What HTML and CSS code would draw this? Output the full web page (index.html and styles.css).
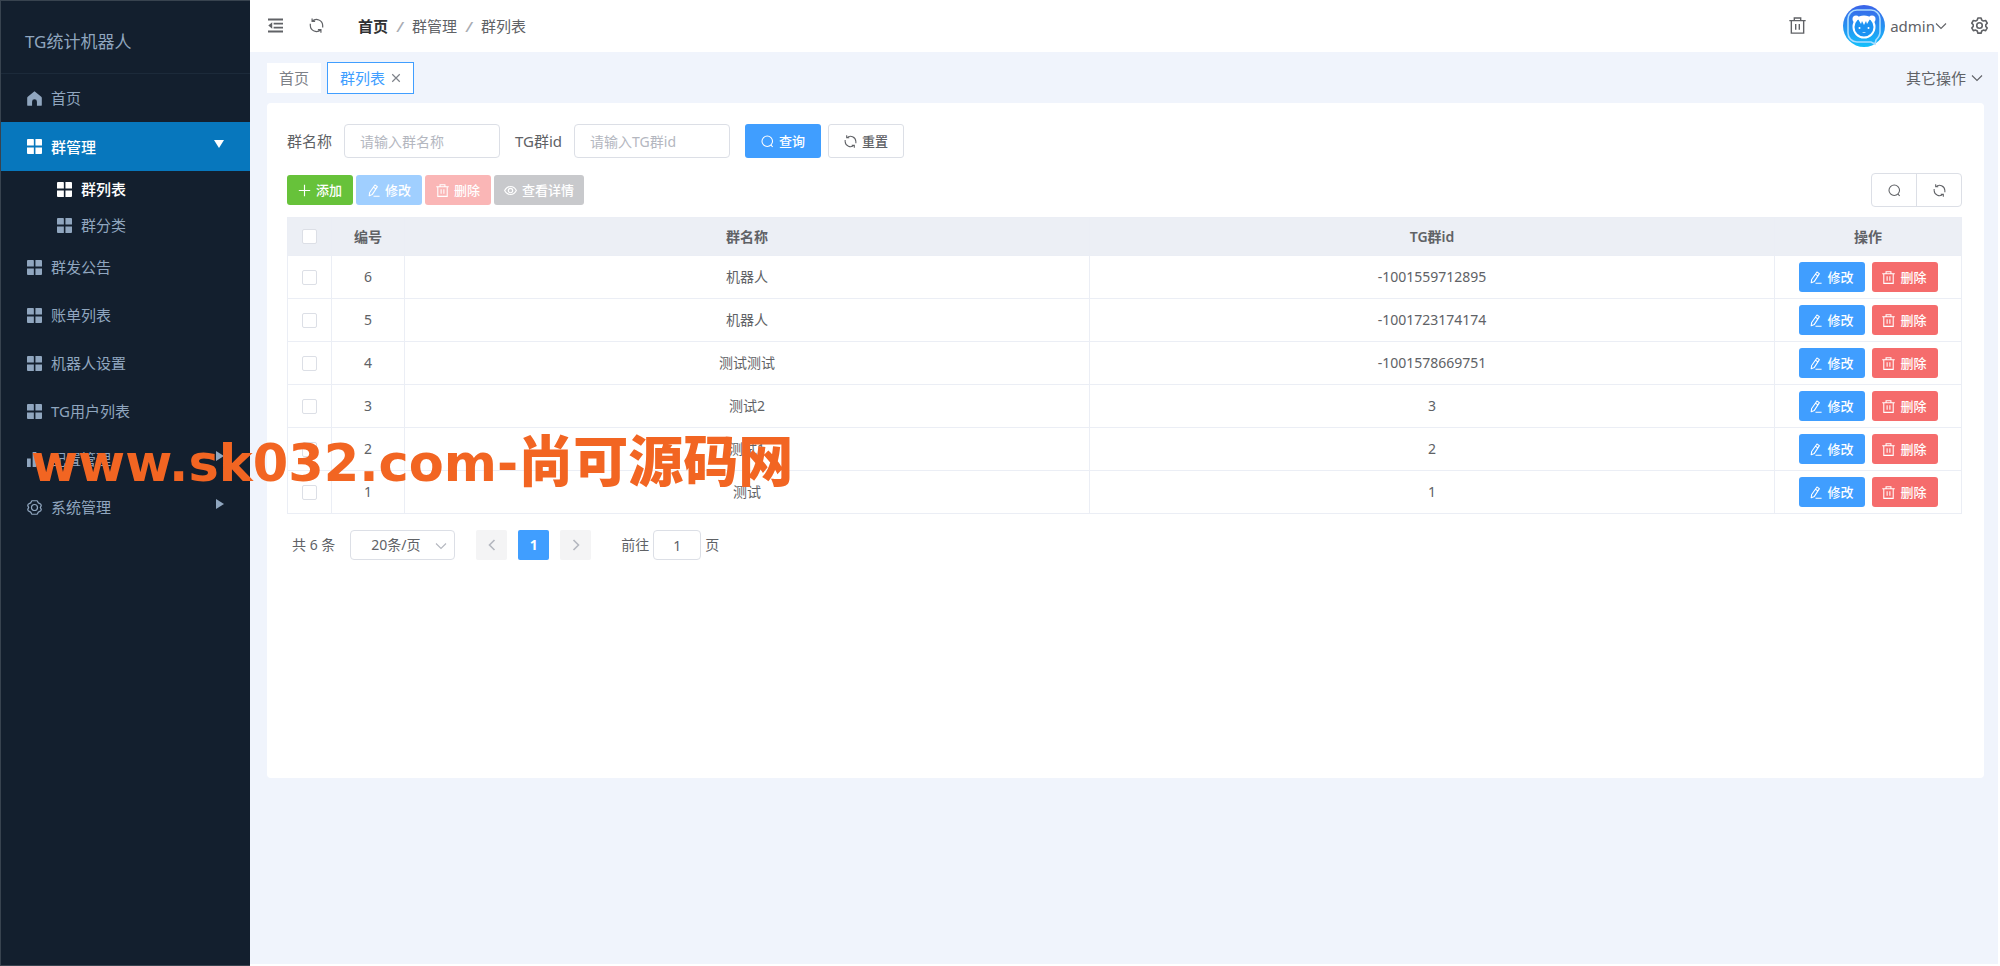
FILE: index.html
```
<!DOCTYPE html>
<html lang="zh-CN">
<head>
<meta charset="utf-8">
<title>TG统计机器人</title>
<link rel="stylesheet" href="styles.css">
</head>
<body>
<svg class="sprite" aria-hidden="true">
  <symbol id="grid" viewBox="0 0 16 16"><path fill="currentColor" d="M1 0h5.500a.8.8 0 0 1 .8.8v6.200H0V1a1 1 0 0 1 1-1zM9 0H15a1 1 0 0 1 1 1v6H9zM0 9h7.300V16H1a1 1 0 0 1-1-1zM9 9H16V15a1 1 0 0 1-1 1H9z"/></symbol>
  <symbol id="home" viewBox="0 0 16 16"><path fill="currentColor" d="M8 0.300 15.200 6.200a1.500 1.500 0 0 1 .6 1.200V14.800a1 1 0 0 1-1 1H10.600V11.500a2.600 2.600 0 0 0-5.200 0v4.300H1.200a1 1 0 0 1-1-1V7.400a1.500 1.500 0 0 1 .6-1.200z"/></symbol>
  <symbol id="bars" viewBox="0 0 16 16"><path fill="currentColor" d="M0 7h4v9H0zM6 0h4v16H6zM12 4h4v12h-4z"/></symbol>
  <symbol id="cog" viewBox="0 0 16 16"><g fill="none" stroke="currentColor" stroke-width="1.300" stroke-linejoin="round"><path d="M5.200.8h5.600l1.300 2.300 2.700 1.500.4 1.400L14.200 8l1 2-.4 1.400-2.700 1.500-1.300 2.300H5.200l-1.300-2.300-2.700-1.500L.8 10l1-2-1-2 .4-1.400 2.700-1.500z"/><circle cx="8" cy="8" r="3.200"/></g></symbol>
  <symbol id="gear" viewBox="0 0 16 16"><g fill="none" stroke="currentColor" stroke-width="1.500" stroke-linejoin="round"><path d="M6.500.9h3l.6 2 1.500.9 2.200-.5 1.500 2.500L13.900 7.300v1.500l1.400 1.500-1.500 2.500-2.200-.5-1.500.9-.6 2h-3l-.6-2-1.500-.9-2.200.5L.7 10.300 2.100 8.800V7.300L.7 5.800l1.500-2.500 2.200.5 1.500-.9z"/><circle cx="8" cy="8" r="2.600"/></g></symbol>
  <symbol id="fold" viewBox="0 0 16 16"><path fill="currentColor" d="M0 .5h16v2.200H0zM6 5h10v2H6zM6 9.200h10v2H6zM0 13.300h16v2.200H0zM4.500 4.500v7L.3 8z"/></symbol>
  <symbol id="refresh" viewBox="0 0 16 16"><path fill="none" stroke="currentColor" stroke-width="1.300" d="M3.500 3.400A6.600 6.600 0 0 1 14.600 8v2M12.500 12.600A6.600 6.600 0 0 1 1.400 8V6M3.300.4v3.100h3.200M12.700 15.600v-3.100H9.500"/></symbol>
  <symbol id="search" viewBox="0 0 16 16"><g fill="none" stroke="currentColor" stroke-width="1.300"><circle cx="7.700" cy="7.700" r="6.500"/><path d="M12.200 12.400l2.200 2.200"/></g></symbol>
  <symbol id="trash" viewBox="0 0 16 16"><path fill="none" stroke="currentColor" stroke-width="1.300" d="M.3 3.400h15.400M5 3.200V.9h6v2.300M2.200 3.600v11.600h11.600V3.600M6.300 6.500v5.500M9.700 6.500v5.500"/></symbol>
  <symbol id="edit" viewBox="0 0 16 16"><path fill="none" stroke="currentColor" stroke-width="1.300" stroke-linejoin="round" d="M9.800 1.200l3 2L6.600 12.800 2.700 14.500l.6-4.100zM8 15h7.500M8 4l3 2"/></symbol>
  <symbol id="plus" viewBox="0 0 16 16"><path stroke="currentColor" stroke-width="1.400" d="M8 1v14M1 8h14"/></symbol>
  <symbol id="eye" viewBox="0 0 16 16"><g fill="none" stroke="currentColor" stroke-width="1.400"><path d="M.8 8C4 1.500 12 1.500 15.200 8 12 14.500 4 14.500.8 8z"/><circle cx="8" cy="8" r="2.700"/></g></symbol>
  <symbol id="down" viewBox="0 0 12 12"><path fill="none" stroke="currentColor" stroke-width="1.100" d="M1 3.500l5 5 5-5"/></symbol>
  <symbol id="left" viewBox="0 0 12 12"><path fill="none" stroke="currentColor" stroke-width="1.600" d="M8.500 1l-5 5 5 5"/></symbol>
  <symbol id="right" viewBox="0 0 12 12"><path fill="none" stroke="currentColor" stroke-width="1.600" d="M3.500 1l5 5-5 5"/></symbol>
  <symbol id="close" viewBox="0 0 12 12"><path stroke="currentColor" stroke-width="1.400" d="M1.500 1.500l9 9M10.500 1.500l-9 9"/></symbol>
</svg>
<div class="app">
  <aside class="sidebar">
    <h1 class="brand">TG统计机器人</h1>
    <nav class="menu">
      <a class="item" href="#"><svg class="icon"><use href="#home"/></svg>首页</a>
      <a class="item active" href="#"><svg class="icon"><use href="#grid"/></svg>群管理<span class="caret open"></span></a>
      <a class="item sub current" href="#"><svg class="icon"><use href="#grid"/></svg>群列表</a>
      <a class="item sub" href="#"><svg class="icon"><use href="#grid"/></svg>群分类</a>
      <a class="item" href="#"><svg class="icon"><use href="#grid"/></svg>群发公告</a>
      <a class="item" href="#"><svg class="icon"><use href="#grid"/></svg>账单列表</a>
      <a class="item" href="#"><svg class="icon"><use href="#grid"/></svg>机器人设置</a>
      <a class="item" href="#"><svg class="icon"><use href="#grid"/></svg>TG用户列表</a>
      <a class="item" href="#"><svg class="icon"><use href="#bars"/></svg>配置管理<span class="caret"></span></a>
      <a class="item" href="#"><svg class="icon"><use href="#cog"/></svg>系统管理<span class="caret"></span></a>
    </nav>
  </aside>
  <div class="main">
    <header class="header">
      <button class="plain" aria-label="折叠菜单"><svg class="icon"><use href="#fold"/></svg></button>
      <button class="plain" aria-label="刷新页面"><svg class="icon"><use href="#refresh"/></svg></button>
      <nav class="crumbs"><a href="#"><b>首页</b></a><i>/</i><a href="#">群管理</a><i>/</i><a href="#">群列表</a></nav>
      <div class="tools">
        <button class="plain" aria-label="清除缓存"><svg class="icon large"><use href="#trash"/></svg></button>
        <button class="plain user">
          <svg class="avatar" viewBox="0 0 42 42">
            <defs><linearGradient id="sky" x1="0" y1="0" x2="0" y2="1"><stop offset="0" stop-color="#3b62e8"/><stop offset="1" stop-color="#12c0fb"/></linearGradient></defs>
            <circle cx="21" cy="21" r="21" fill="url(#sky)"/>
            <path d="M14 5h14c5 0 9 4 9 9v13c0 3-2 6-4 8l-1 4-4-2H14c-5 0-9-4-9-9V14c0-5 4-9 9-9z" fill="none" stroke="#a9dcff" stroke-width="1.600"/>
            <circle cx="13" cy="14" r="3.500" fill="#fff"/><circle cx="29" cy="14" r="3.500" fill="#fff"/>
            <circle cx="21" cy="22" r="10.500" fill="#1b93f3" stroke="#fff" stroke-width="2"/>
            <path d="M15 14c3-3 9-3 12 0l-3 5-1-3-2 4-2-4-1 3z" fill="#fff"/>
            <circle cx="16.500" cy="23" r="1" fill="#fff"/><circle cx="25.500" cy="23" r="1" fill="#fff"/>
            <path d="M19 27c1 1 3 1 4 0z" fill="#fff"/>
          </svg>
          <span>admin</span><svg class="chev"><use href="#down"/></svg>
        </button>
        <button class="plain" aria-label="设置"><svg class="icon large"><use href="#gear"/></svg></button>
      </div>
    </header>
    <div class="tabs">
      <a class="tab" href="#">首页</a>
      <a class="tab on" href="#">群列表<svg class="x"><use href="#close"/></svg></a>
      <button class="plain more">其它操作<svg class="chev"><use href="#down"/></svg></button>
    </div>
    <main class="card">
      <form class="search">
        <label for="name">群名称</label><input class="field" id="name" placeholder="请输入群名称">
        <label for="tgid">TG群id</label><input class="field" id="tgid" placeholder="请输入TG群id">
        <button type="button" class="btn tall blue"><svg class="mini"><use href="#search"/></svg>查询</button>
        <button type="button" class="btn tall line"><svg class="mini"><use href="#refresh"/></svg>重置</button>
      </form>
      <div class="toolbar">
        <button class="btn green"><svg class="mini"><use href="#plus"/></svg>添加</button>
        <button class="btn blue" disabled><svg class="mini"><use href="#edit"/></svg>修改</button>
        <button class="btn red" disabled><svg class="mini"><use href="#trash"/></svg>删除</button>
        <button class="btn gray" disabled><svg class="mini"><use href="#eye"/></svg>查看详情</button>
        <div class="group">
          <button aria-label="搜索"><svg class="mini"><use href="#search"/></svg></button>
          <button aria-label="刷新"><svg class="mini"><use href="#refresh"/></svg></button>
        </div>
      </div>
      <table class="table">
        <colgroup><col class="c-check"><col class="c-no"><col><col><col class="c-act"></colgroup>
        <thead><tr><th><input type="checkbox" aria-label="全选"></th><th>编号</th><th>群名称</th><th>TG群id</th><th>操作</th></tr></thead>
        <tbody>
          <tr><td><input type="checkbox" aria-label="选择6"></td><td>6</td><td>机器人</td><td>-1001559712895</td><td><div class="acts"><button class="btn blue"><svg class="mini"><use href="#edit"/></svg>修改</button><button class="btn red"><svg class="mini"><use href="#trash"/></svg>删除</button></div></td></tr>
          <tr><td><input type="checkbox" aria-label="选择5"></td><td>5</td><td>机器人</td><td>-1001723174174</td><td><div class="acts"><button class="btn blue"><svg class="mini"><use href="#edit"/></svg>修改</button><button class="btn red"><svg class="mini"><use href="#trash"/></svg>删除</button></div></td></tr>
          <tr><td><input type="checkbox" aria-label="选择4"></td><td>4</td><td>测试测试</td><td>-1001578669751</td><td><div class="acts"><button class="btn blue"><svg class="mini"><use href="#edit"/></svg>修改</button><button class="btn red"><svg class="mini"><use href="#trash"/></svg>删除</button></div></td></tr>
          <tr><td><input type="checkbox" aria-label="选择3"></td><td>3</td><td>测试2</td><td>3</td><td><div class="acts"><button class="btn blue"><svg class="mini"><use href="#edit"/></svg>修改</button><button class="btn red"><svg class="mini"><use href="#trash"/></svg>删除</button></div></td></tr>
          <tr><td><input type="checkbox" aria-label="选择2"></td><td>2</td><td>测试1</td><td>2</td><td><div class="acts"><button class="btn blue"><svg class="mini"><use href="#edit"/></svg>修改</button><button class="btn red"><svg class="mini"><use href="#trash"/></svg>删除</button></div></td></tr>
          <tr><td><input type="checkbox" aria-label="选择1"></td><td>1</td><td>测试</td><td>1</td><td><div class="acts"><button class="btn blue"><svg class="mini"><use href="#edit"/></svg>修改</button><button class="btn red"><svg class="mini"><use href="#trash"/></svg>删除</button></div></td></tr>
        </tbody>
      </table>
      <div class="pager">
        <span>共 6 条</span>
        <span class="size"><select aria-label="每页条数"><option>20条/页</option></select><svg class="chev"><use href="#down"/></svg></span>
        <button class="page" aria-label="上一页"><svg class="chev"><use href="#left"/></svg></button>
        <button class="page on">1</button>
        <button class="page" aria-label="下一页"><svg class="chev"><use href="#right"/></svg></button>
        <label class="jump">前往<input value="1">页</label>
      </div>
    </main>
  </div>
</div>
<div class="watermark">www.sk032.com-<span>尚可源码网</span></div>
</body>
</html>
```
FILE: styles.css
```
* { box-sizing: border-box; }
body {
  margin: 0;
  font: 14px/20px "Noto Sans", "Noto Sans CJK SC", sans-serif;
  color: #606266;
}
a { color: inherit; text-decoration: none; }
button, input, select { font: inherit; color: inherit; margin: 0; }
button { cursor: pointer; }
svg { flex: none; }
.sprite { position: absolute; width: 0; height: 0; }
.app { display: flex; min-height: 100vh; }

.sidebar {
  width: 250px;
  flex: none;
  background: #131f2e;
  border: 1px solid #38434f;
  border-right: 0;
  color: #90a6bf;
}
.brand {
  margin: 0;
  padding: 29px 24px 19px;
  font-size: 17px;
  line-height: 24px;
  font-weight: 400;
  border-bottom: 1px solid #1c2a3a;
}
.menu { font-size: 15px; }
.item {
  display: flex;
  align-items: center;
  gap: 9px;
  height: 48px;
  padding: 0 26px;
}
.item.active { height: 49px; background: #0777bd; color: #fff; font-weight: 500; }
.item.sub { height: 36px; padding-left: 56px; }
.item.current { color: #fff; font-weight: 500; }
.caret {
  margin-left: auto;
  margin-bottom: 6px;
  border: 5px solid transparent;
  border-left: 8px solid;
  border-right: 0;
}
.caret.open {
  border: 5px solid transparent;
  border-top: 8px solid;
  border-bottom: 0;
}
.icon { width: 15px; height: 15px; }
.icon.large { width: 17px; height: 17px; }
.mini { width: 13px; height: 13px; }
.chev { width: 12px; height: 12px; }

.main {
  flex: 1;
  min-width: 0;
  background: #f0f4fc;
  border: 2px solid #fff;
  border-width: 0 2px 2px 0;
}
.plain {
  display: flex;
  align-items: center;
  padding: 0;
  border: 0;
  background: none;
}
.header {
  display: flex;
  align-items: center;
  height: 52px;
  padding: 0 10px 1px 18px;
  gap: 26px;
  background: #fff;
  font-size: 15px;
}
.crumbs { display: flex; gap: 9px; margin-left: 8px; }
.crumbs b { color: #303133; font-weight: 700; }
.crumbs i { color: #a8abb2; width: 6px; font-weight: 600; }
.tools { display: flex; align-items: center; margin-left: auto; }
.user { margin: 0 24px 0 37px; }
.avatar { width: 42px; height: 42px; margin-right: 5px; }

.tabs {
  display: flex;
  align-items: center;
  gap: 6px;
  height: 51px;
  padding: 0 15px 0 17px;
  font-size: 15px;
}
.tab {
  display: flex;
  align-items: center;
  height: 30px;
  padding: 0 12px;
  background: #fff;
  color: #7d8188;
}
.tab.on { height: 32px; border: 1px solid #409eff; color: #409eff; }
.x { width: 10px; height: 10px; margin-left: 6px; color: #7d8188; }
.more { margin-left: auto; gap: 5px; }

.card {
  margin: 0 14px 0 17px;
  padding: 21px 22px 20px 20px;
  min-height: 675px;
  background: #fff;
  border-radius: 4px;
}
.search { display: flex; align-items: center; font-size: 15px; }
.field {
  width: 156px;
  height: 34px;
  margin: 0 15px 0 12px;
  padding: 0 15px;
  border: 1px solid #dcdfe6;
  border-radius: 4px;
  font-size: 14px;
}
.field::placeholder { color: #b4b7bf; }
.btn {
  display: flex;
  align-items: center;
  justify-content: center;
  gap: 5px;
  width: 66px;
  height: 30px;
  padding: 0;
  border: 0;
  border-radius: 3px;
  color: #fff;
  font-size: 13px;
  font-weight: 500;
}
.btn.tall { width: 76px; height: 34px; }
.btn.line { margin-left: 7px; background: #fff; border: 1px solid #dcdfe6; color: #606266; }
.blue { background: #409eff; }
.blue:disabled { background: #a0cfff; }
.red { background: #f56c6c; }
.red:disabled { background: #fab6b6; }
.green { background: #67c23a; }
.btn.gray { width: 90px; background: #c8c9cc; }
.toolbar { display: flex; align-items: center; gap: 3px; margin: 15px 0 10px; }
.group { display: flex; margin-left: auto; border: 1px solid #dcdfe6; border-radius: 4px; }
.group button {
  display: flex;
  align-items: center;
  justify-content: center;
  width: 44px;
  height: 32px;
  padding: 0;
  border: 0;
  background: none;
}
.group button + button { width: 45px; border-left: 1px solid #dcdfe6; }

.table { width: 100%; table-layout: fixed; border-collapse: collapse; text-align: center; }
.table th, .table td { height: 43px; padding: 0; border: 1px solid #ebeef5; }
.table th { height: 38px; background: #eceff5; font-weight: 600; color: #606266; }
.c-check { width: 44px; }
.c-no { width: 73px; }
.c-act { width: 187px; }
.table input {
  appearance: none;
  display: block;
  width: 15px;
  height: 15px;
  margin: 0 auto;
  background: #fff;
  border: 1px solid #dcdfe6;
  border-radius: 2px;
}
.acts { display: flex; justify-content: center; gap: 7px; }

.pager { display: flex; align-items: center; margin: 16px 0 0 5px; }
.size { position: relative; margin: 0 21px 0 15px; }
.size select {
  appearance: none;
  width: 105px;
  height: 30px;
  padding: 0 20px;
  border: 1px solid #dcdfe6;
  border-radius: 4px;
  background: #fff;
}
.size .chev { position: absolute; right: 8px; top: 10px; color: #b4b7bf; }
.page {
  display: flex;
  align-items: center;
  justify-content: center;
  width: 31px;
  height: 30px;
  margin-right: 11px;
  padding: 0;
  border: 0;
  border-radius: 2px;
  background: #f4f4f5;
  color: #b4b7bf;
}
.page.on { background: #409eff; color: #fff; font-weight: 700; }
.jump { display: flex; align-items: center; gap: 4px; margin-left: 19px; }
.jump input {
  width: 48px;
  height: 30px;
  padding: 0;
  border: 1px solid #dcdfe6;
  border-radius: 4px;
  text-align: center;
}
.watermark {
  position: absolute;
  left: 31px;
  top: 425px;
  font: 700 51px/64px "DejaVu Sans", sans-serif;
  color: #f26522;
  white-space: nowrap;
  pointer-events: none;
}
.watermark span { font: 900 55px/64px "Noto Sans CJK SC", sans-serif; }
```
